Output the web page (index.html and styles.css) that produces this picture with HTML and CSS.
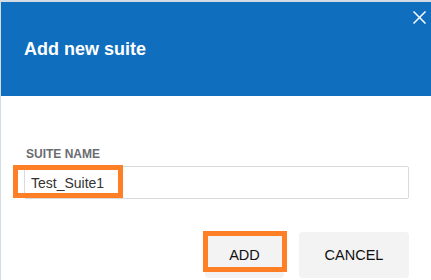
FILE: index.html
```html
<!DOCTYPE html>
<html>

<head>
    <meta charset="UTF-8">
    <meta name="viewport" content="width=device-width, initial-scale=1.0">
    <title>Add new suite</title>
    <link rel="stylesheet" href="styles.css">
</head>

<body>
    <div class="dialog">
        <!-- Blue title bar -->
        <div class="dialog-header">
            <h1>Add new suite</h1>
            <button class="close-button" aria-label="Close">
                <svg width="13" height="13" viewBox="0 0 13 13">
                    <path d="M0.5 0.5 L12.5 12.5 M12.5 0.5 L0.5 12.5" stroke="#fff" stroke-width="1.5" fill="none" />
                </svg>
            </button>
        </div>

        <div class="dialog-body">
            <label class="field-label" for="suite-name">SUITE NAME</label>
            <div class="field">
                <input type="text" id="suite-name" value="Test_Suite1">
                <span class="highlight highlight-input"></span>
            </div>

            <div class="actions">
                <button class="btn btn-add">ADD<span class="highlight highlight-add"></span></button>
                <button class="btn btn-cancel">CANCEL</button>
            </div>
        </div>
    </div>
</body>

</html>
```

FILE: styles.css
```css
/* Basic reset */
* {
    margin: 0;
    padding: 0;
    box-sizing: border-box;
    font-family: "Liberation Sans", Arial, sans-serif;
}

body {
    background-color: #d3dbe5;
    overflow: hidden;
}

.dialog {
    position: relative;
    width: 430px;
    margin: 2px 0 0 1px;
    background-color: #fff;
}

.dialog-header {
    height: 94px;
    padding: 37px 0 0 23px;
    background-color: #0f6ebe;
}

.dialog-header h1 {
    font-size: 18px;
    line-height: 20px;
    font-weight: bold;
    color: #fff;
}

.close-button {
    position: absolute;
    top: 9px;
    right: 5px;
    width: 13px;
    height: 13px;
    border: none;
    background: none;
    display: flex;
    cursor: pointer;
}

.dialog-body {
    padding: 51px 22px 2px 23px;
}

.field-label {
    display: block;
    padding-left: 2px;
    font-size: 12px;
    line-height: 14px;
    font-weight: bold;
    color: #6b6c70;
}

.field {
    position: relative;
    margin-top: 5px;
}

#suite-name {
    display: block;
    width: 100%;
    height: 33px;
    padding: 0 6px;
    font-size: 14px;
    color: #333;
    border: 1px solid #dadada;
    border-radius: 2px;
    outline: none;
}

/* Orange annotation boxes */
.highlight {
    position: absolute;
    border: 5px solid #ff7f27;
}

.highlight-input {
    left: -11px;
    top: -1px;
    width: 110px;
    height: 33px;
}

.highlight-add {
    left: -2px;
    top: -1px;
    width: 84px;
    height: 41px;
}

.actions {
    display: flex;
    justify-content: flex-end;
    gap: 15px;
    margin-top: 33px;
}

.btn {
    position: relative;
    height: 46px;
    font-size: 14.5px;
    color: #111;
    background-color: #f3f3f3;
    border: none;
    border-radius: 4px;
    cursor: pointer;
}

.btn-add {
    width: 79px;
}

.btn-cancel {
    width: 110px;
}
```
